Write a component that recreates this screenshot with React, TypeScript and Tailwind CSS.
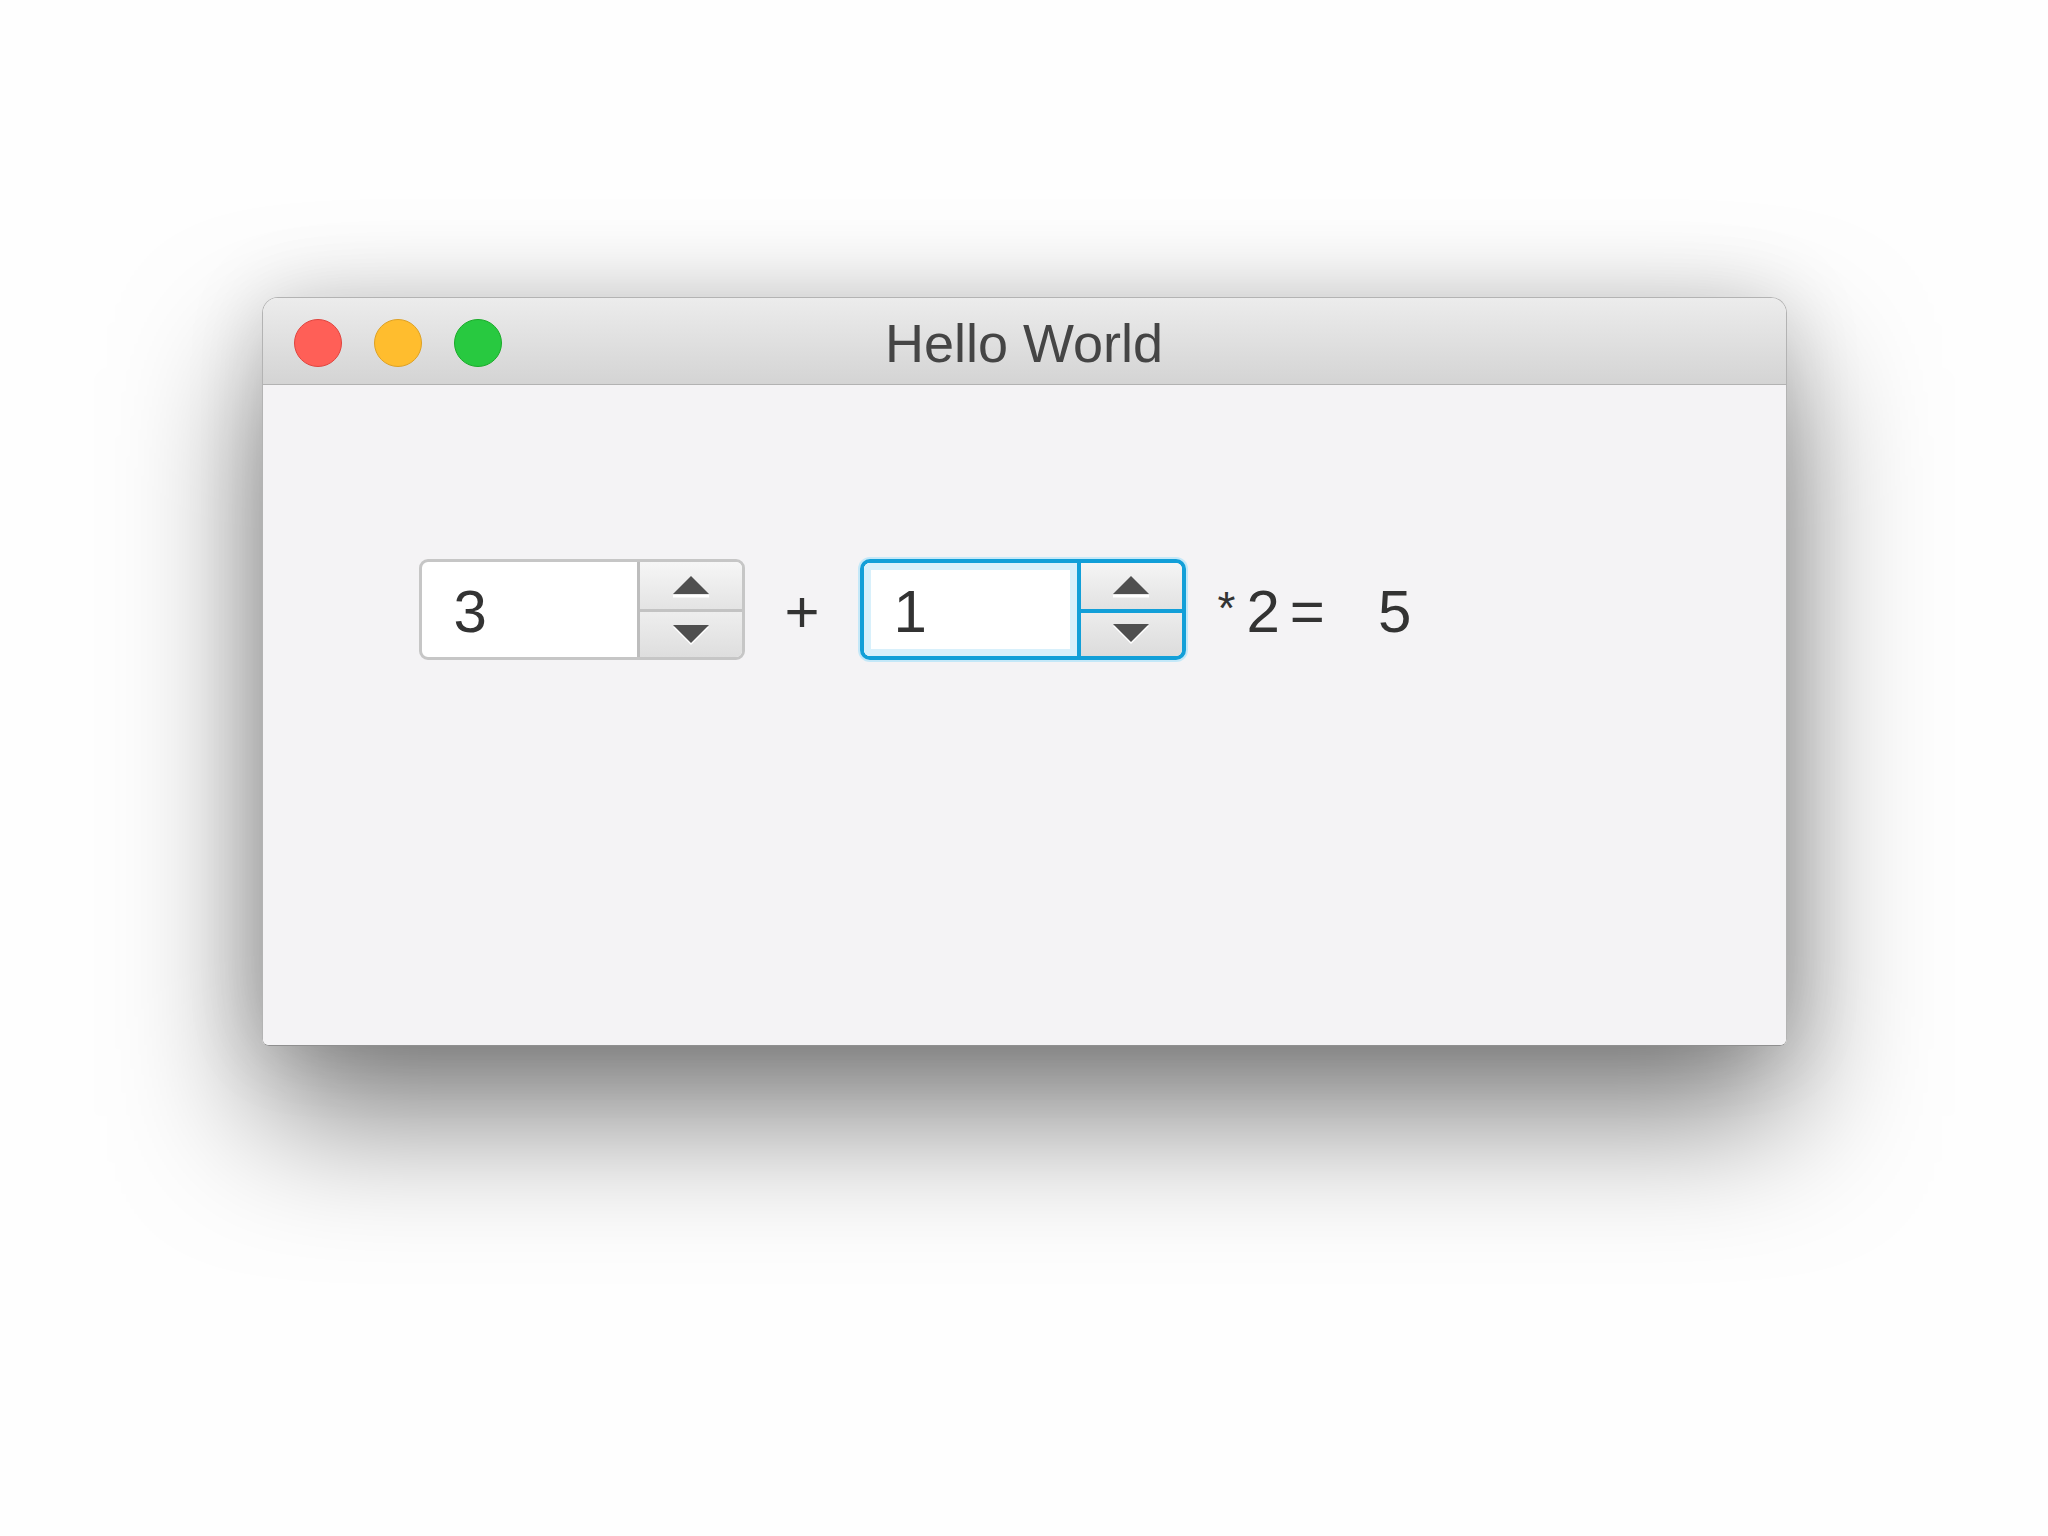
import React from "react";

function Arrow({ dir }: { dir: "up" | "down" }) {
  return (
    <svg width="38" height="24" viewBox="0 0 38 24" className="block">
      {dir === "up" ? (
        <>
          <rect x="1" y="20" width="36" height="2.5" fill="#ffffff" />
          <polygon points="1,19 19,1 37,19" fill="#4f4f4f" />
        </>
      ) : (
        <>
          <polygon points="1,4 37,4 19,22" fill="#ffffff" />
          <polygon points="1,2 37,2 19,20" fill="#4f4f4f" />
        </>
      )}
    </svg>
  );
}

function Spinner({ value, focused }: { value: string; focused?: boolean }) {
  if (focused) {
    return (
      <div className="flex h-[101px] w-[326px] overflow-hidden rounded-[10px] border-[4px] border-[#129fd8] bg-white shadow-[0_0_0_2px_#c4e8f8]">
        <div className="flex flex-1 items-center bg-white pl-[30px] pt-[4px] text-[60px] leading-none text-[#333333] shadow-[inset_0_0_0_7px_#d8f0fb]">
          {value}
        </div>
        <div className="flex w-[105px] flex-col border-l-[4px] border-[#129fd8]">
          <div className="flex flex-1 items-center justify-center border-b-[4px] border-[#129fd8] bg-gradient-to-b from-[#f5f5f5] to-[#e2e2e2] pt-[2px]">
            <Arrow dir="up" />
          </div>
          <div className="flex flex-1 items-center justify-center bg-gradient-to-b from-[#ececec] to-[#dcdcdc]">
            <Arrow dir="down" />
          </div>
        </div>
      </div>
    );
  }
  return (
    <div className="flex h-[101px] w-[326px] overflow-hidden rounded-[9px] border-[3px] border-[#c6c6c6] bg-white">
      <div className="flex flex-1 items-center pl-[32px] pt-[4px] text-[60px] leading-none text-[#333333]">
        {value}
      </div>
      <div className="flex w-[105px] flex-col border-l-[3px] border-[#bdbdbd]">
        <div className="flex flex-1 items-center justify-center border-b-[3px] border-[#c3c3c3] bg-gradient-to-b from-[#f6f6f6] to-[#e4e4e4] pt-[2px]">
          <Arrow dir="up" />
        </div>
        <div className="flex flex-1 items-center justify-center bg-gradient-to-b from-[#eeeeee] to-[#dedede]">
          <Arrow dir="down" />
        </div>
      </div>
    </div>
  );
}

export default function App() {
  return (
    <div
      className="min-h-[1536px] w-full bg-[#fefefe] pt-[297px]"
      style={{ fontFamily: '"Liberation Sans", Arial, sans-serif' }}
    >
      <div className="mx-auto flex h-[749px] w-[1525px] flex-col overflow-hidden rounded-t-[16px] rounded-b-[7px] border border-[#b3b3b3] border-b-[#8f8f8f] shadow-[0_70px_140px_rgba(0,0,0,0.5),0_0_80px_rgba(0,0,0,0.14)]">
        <div className="grid h-[87px] shrink-0 grid-cols-[1fr_auto_1fr] items-center border-b border-[#b2b2b2] bg-gradient-to-b from-[#ececec] to-[#d4d4d4]">
          <div className="flex items-center gap-[32px] pl-[31px] pt-[3px]">
            <div className="h-[48px] w-[48px] rounded-full border border-[#e0443e] bg-[#ff5f57]" />
            <div className="h-[48px] w-[48px] rounded-full border border-[#dea123] bg-[#ffbd2e]" />
            <div className="h-[48px] w-[48px] rounded-full border border-[#1aab29] bg-[#28c940]" />
          </div>
          <div className="pt-[4px] text-[54px] leading-none text-[#454545]">Hello World</div>
          <div />
        </div>
        <div className="flex-1 bg-[#f4f3f5] pl-[156px] pt-[174px]">
          <div className="flex items-center text-[60px] leading-none text-[#333333]">
            <Spinner value="3" />
            <span className="mx-[40px] pt-[4px]">+</span>
            <Spinner value="1" focused />
            <div className="ml-[32px] flex items-center pt-[4px]">
              <span className="mb-[8px] text-[46px]">*</span>
              <span className="ml-[11px]">2</span>
              <span className="ml-[10px]">=</span>
              <span className="ml-[53px]">5</span>
            </div>
          </div>
        </div>
      </div>
    </div>
  );
}
